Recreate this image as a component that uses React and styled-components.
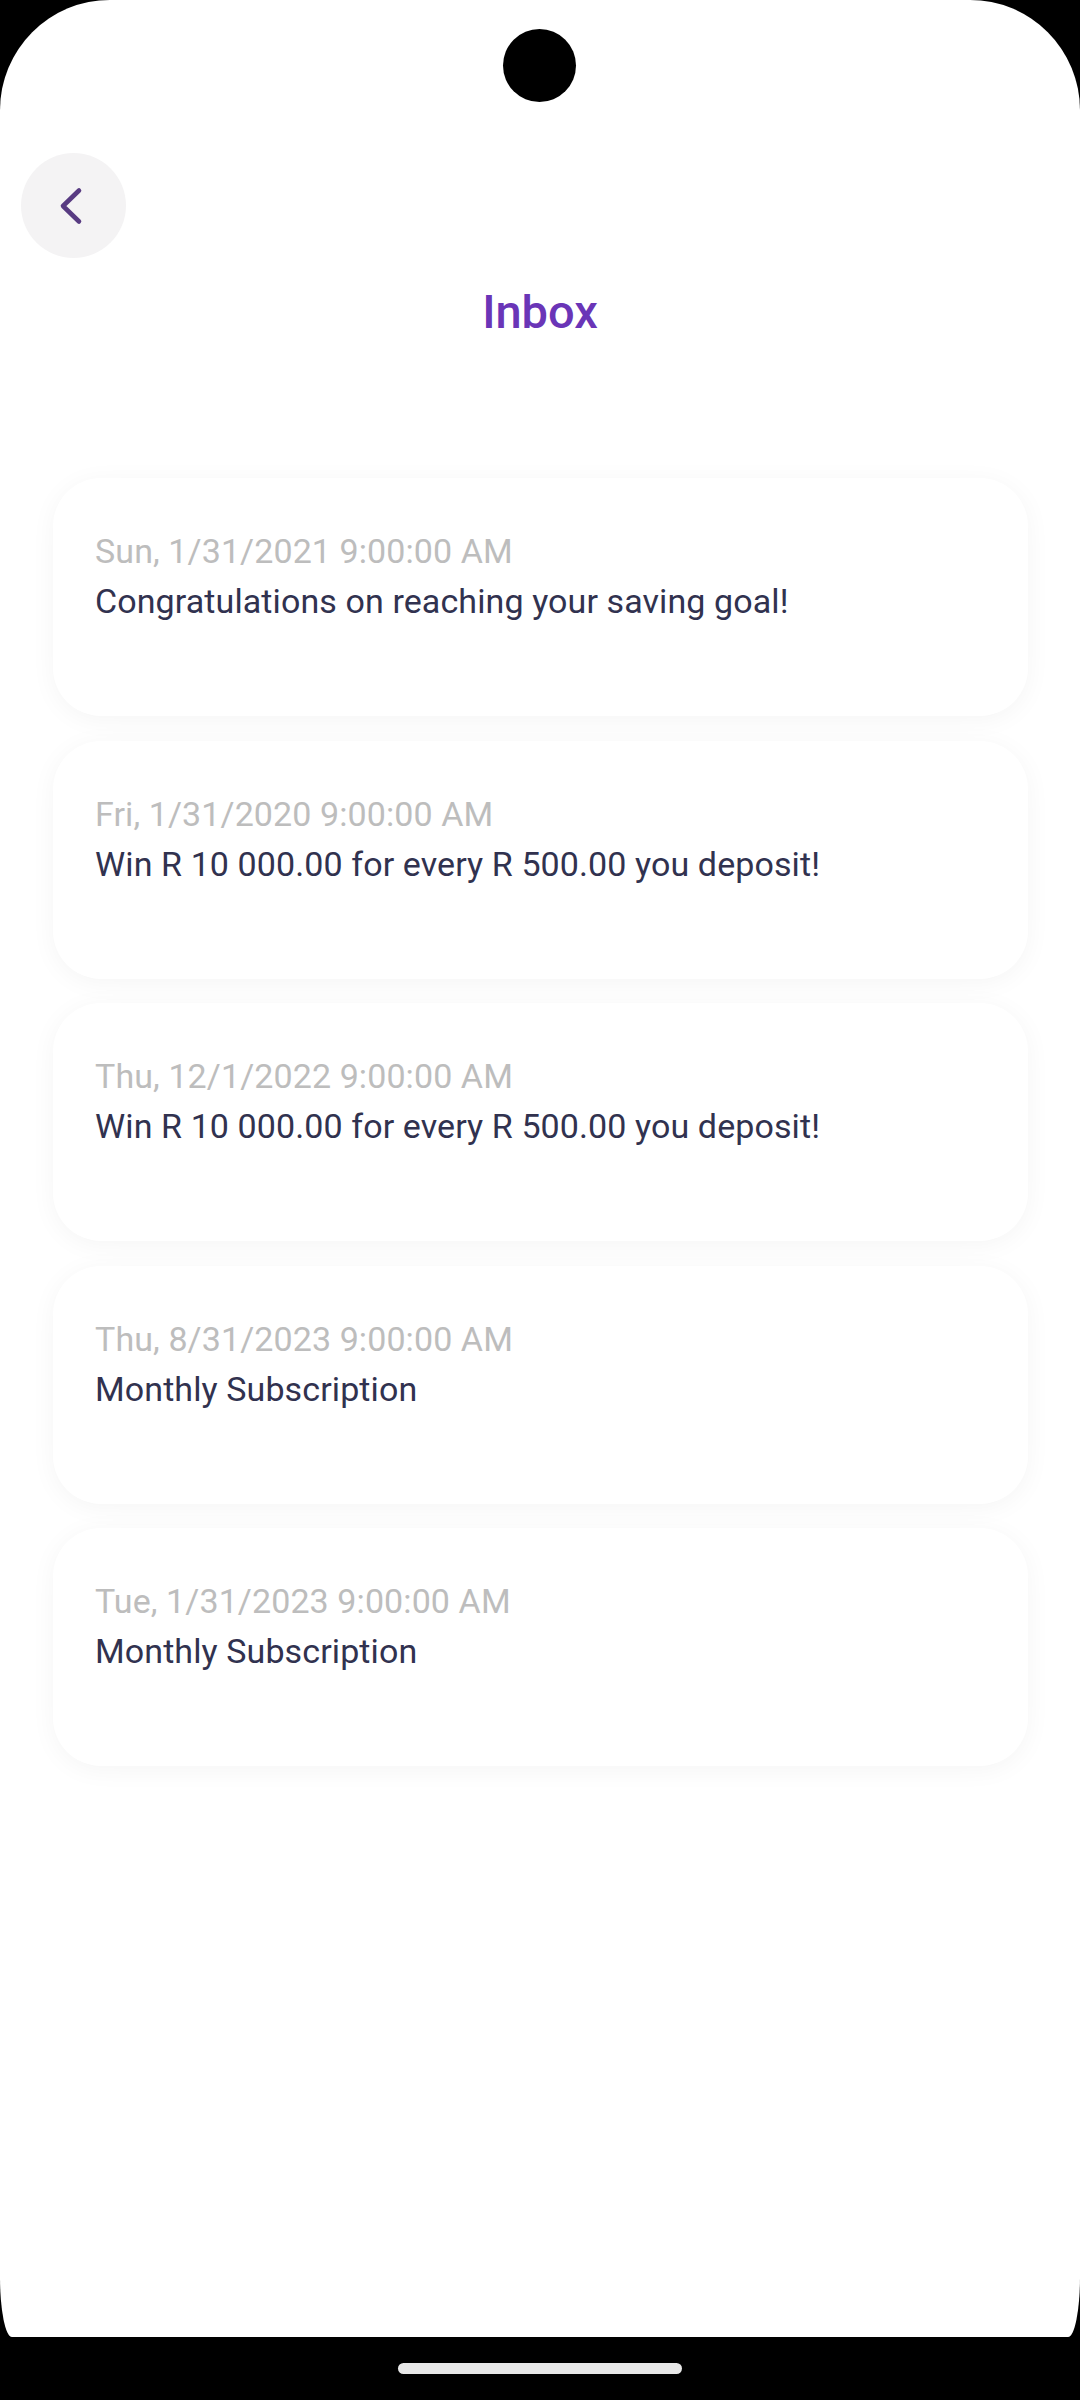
import React from 'react';
import styled, { createGlobalStyle } from 'styled-components';

const messages = [
  { id: 1, date: 'Sun, 1/31/2021 9:00:00 AM', text: 'Congratulations on reaching your saving goal!' },
  { id: 2, date: 'Fri, 1/31/2020 9:00:00 AM', text: 'Win R 10 000.00 for every R 500.00 you deposit!' },
  { id: 3, date: 'Thu, 12/1/2022 9:00:00 AM', text: 'Win R 10 000.00 for every R 500.00 you deposit!' },
  { id: 4, date: 'Thu, 8/31/2023 9:00:00 AM', text: 'Monthly Subscription' },
  { id: 5, date: 'Tue, 1/31/2023 9:00:00 AM', text: 'Monthly Subscription' },
];

const App = () => {
  return (
    <>
      <GlobalStyle />
      <Device>
        <Screen>
          {/* front camera cutout */}
          <Camera />

          <Header>
            <BackButton type="button" aria-label="Back">
              <svg width="26" height="40" viewBox="0 0 26 40" fill="none">
                <polyline
                  points="20,4.5 4,20 20,35.5"
                  stroke="#583b82"
                  strokeWidth="4.6"
                  strokeLinecap="round"
                  strokeLinejoin="round"
                />
              </svg>
            </BackButton>
          </Header>

          <Title>Inbox</Title>

          <MessageList>
            {messages.map((msg) => (
              <MessageCard key={msg.id}>
                <MessageDate>{msg.date}</MessageDate>
                <MessageText>{msg.text}</MessageText>
              </MessageCard>
            ))}
          </MessageList>
        </Screen>

        <NavBar>
          <HomeIndicator />
        </NavBar>
      </Device>
    </>
  );
};

// Styled components
const GlobalStyle = createGlobalStyle`
  html, body {
    margin: 0;
    padding: 0;
    background: #000;
  }

  body {
    font-family: Roboto, "Noto Sans", Arial, sans-serif;
    -webkit-font-smoothing: antialiased;
  }

  * {
    box-sizing: border-box;
  }
`;

const Device = styled.div`
  display: flex;
  flex-direction: column;
  width: 1080px;
  height: 2400px;
  background: #000;
  overflow: hidden;
`;

const Screen = styled.main`
  position: relative;
  flex: 1;
  background: #fff;
  border-radius: 110px 110px 12px 12px / 110px 110px 60px 60px;
`;

const Camera = styled.div`
  position: absolute;
  top: 29px;
  left: 503px;
  width: 73px;
  height: 73px;
  border-radius: 50%;
  background: #000;
`;

const Header = styled.header`
  display: flex;
  align-items: center;
  padding: 153px 0 0 21px;
`;

const BackButton = styled.button`
  display: flex;
  align-items: center;
  justify-content: center;
  width: 105px;
  height: 105px;
  padding: 0 4px 0 0;
  border: none;
  border-radius: 50%;
  background: #f4f3f4;
  cursor: pointer;
`;

const Title = styled.h1`
  margin: 26px 0 0;
  text-align: center;
  font-size: 47px;
  line-height: 56px;
  font-weight: 500;
  color: #6a35b7;
`;

const MessageList = styled.section`
  display: flex;
  flex-direction: column;
  gap: 24.5px;
  margin-top: 138px;
  padding: 0 52px 0 53px;
`;

const MessageCard = styled.article`
  display: flex;
  flex-direction: column;
  height: 238px;
  padding: 48px 42px;
  background: #fff;
  border-radius: 48px;
  box-shadow: 0 4px 26px rgba(0, 0, 0, 0.045);
`;

const MessageDate = styled.div`
  font-size: 34px;
  line-height: 50px;
  letter-spacing: 0.1px;
  color: #bdbdbd;
`;

const MessageText = styled.div`
  font-size: 34px;
  line-height: 50px;
  letter-spacing: 0.1px;
  color: #31324f;
`;

const NavBar = styled.footer`
  display: flex;
  align-items: center;
  justify-content: center;
  height: 63px;
  flex-shrink: 0;
  background: #000;
`;

const HomeIndicator = styled.div`
  width: 284px;
  height: 11px;
  border-radius: 6px;
  background: #e8e8e8;
`;

export default App;
